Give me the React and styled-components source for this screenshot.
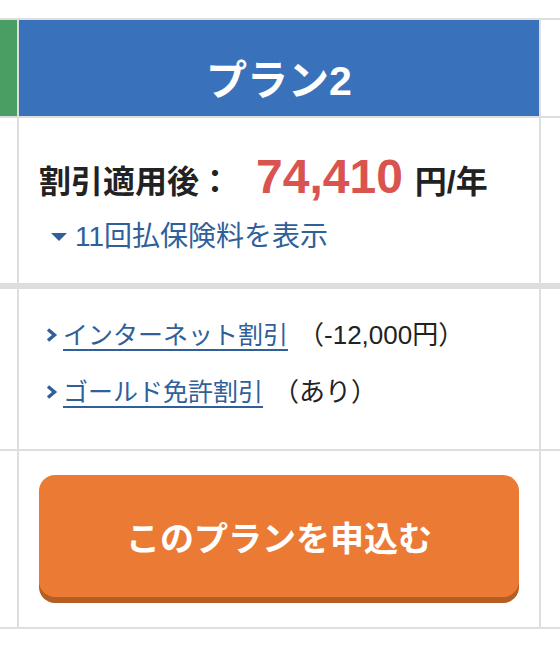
import React from "react";
import styled, { createGlobalStyle } from "styled-components";

const GlobalStyle = createGlobalStyle`
  html, body {
    margin: 0;
    padding: 0;
    background: #fff;
  }
  body {
    font-family: "Liberation Sans", "Noto Sans CJK JP", sans-serif;
    color: #222;
  }
`;

const Page = styled.div`
  padding-top: 18px;
`;

/* one table row: the grey background shows through the gaps as the rules */
const Row = styled.div`
  display: grid;
  grid-template-columns: 17px 520px 1fr;
  column-gap: 2px;
  background: #dedede;
  padding-top: ${(p) => (p.$first ? 2 : 0)}px;
  padding-bottom: ${(p) => p.$rule}px;
`;

const Cell = styled.div`
  background: ${(p) => p.$bg || "#fff"};
`;

const PlanHead = styled.div`
  height: 96px;
  box-sizing: border-box;
  padding-top: 17px;
  background: #3a71bb;
  color: #fff;
  display: flex;
  align-items: center;
  justify-content: center;
  font-size: 41px;
  font-weight: 700;
`;

const PriceCell = styled.div`
  background: #fff;
  padding: 35px 20px 26px;
`;

const PriceLine = styled.div`
  display: flex;
  align-items: baseline;
  line-height: 1;
`;

const PriceLabel = styled.span`
  font-size: 32px;
  font-weight: 700;
  color: #222;
`;

const Amount = styled.span`
  margin-left: 25px;
  font-size: 48px;
  font-weight: 700;
  color: #d9534f;
`;

const Unit = styled.span`
  margin-left: 12px;
  font-size: 32px;
  font-weight: 700;
  color: #222;
`;

const Toggle = styled.a`
  display: flex;
  align-items: center;
  gap: 8px;
  margin: 16px 0 0 12px;
  font-size: 28px;
  line-height: 40px;
  color: #30609a;
  text-decoration: none;
  cursor: pointer;
`;

const Caret = styled.span`
  width: 0;
  height: 0;
  border-left: 8px solid transparent;
  border-right: 8px solid transparent;
  border-top: 8px solid #30609a;
`;

const DiscountCell = styled.div`
  background: #fff;
  padding: 26px 20px 37px 26px;
`;

const DiscountList = styled.ul`
  list-style: none;
  margin: 0;
  padding: 0;
  display: flex;
  flex-direction: column;
  gap: 17px;
`;

const DiscountItem = styled.li`
  display: flex;
  align-items: center;
  font-size: 25px;
  line-height: 40px;
`;

const Chevron = styled.svg`
  width: 13px;
  height: 16px;
  margin-right: 5px;
  flex: none;
`;

const DiscountLink = styled.a`
  color: #30609a;
  text-decoration: underline;
  text-decoration-thickness: 2px;
  text-underline-offset: 5px;
  cursor: pointer;
`;

const Note = styled.span`
  margin-left: 10px;
  font-size: 26px;
  color: #222;
`;

const ApplyCell = styled.div`
  background: #fff;
  padding: 24px 20px;
`;

const ApplyButton = styled.button`
  display: flex;
  align-items: center;
  justify-content: center;
  width: 100%;
  height: 122px;
  margin-bottom: 6px;
  border: none;
  border-radius: 16px;
  background: #eb7b34;
  box-shadow: 0 6px 0 #b45e23;
  color: #fff;
  font-family: inherit;
  font-size: 34px;
  font-weight: 700;
  cursor: pointer;
`;

const ChevronIcon = () => (
  <Chevron viewBox="0 0 13 16" aria-hidden="true">
    <polyline
      points="3,2.5 9.5,8 3,13.5"
      fill="none"
      stroke="#30609a"
      strokeWidth="3.4"
      strokeLinecap="butt"
    />
  </Chevron>
);

const discounts = [
  { name: "インターネット割引", note: "（-12,000円）" },
  { name: "ゴールド免許割引", note: "（あり）" },
];

export default function App() {
  return (
    <Page>
      <GlobalStyle />
      <Row $first $rule={2}>
        <Cell $bg="#4a9e63" />
        <PlanHead>プラン2</PlanHead>
        <Cell />
      </Row>
      <Row $rule={6}>
        <Cell />
        <PriceCell>
          <PriceLine>
            <PriceLabel>割引適用後：</PriceLabel>
            <Amount>74,410</Amount>
            <Unit>円/年</Unit>
          </PriceLine>
          <Toggle>
            <Caret />
            11回払保険料を表示
          </Toggle>
        </PriceCell>
        <Cell />
      </Row>
      <Row $rule={2}>
        <Cell />
        <DiscountCell>
          <DiscountList>
            {discounts.map((d) => (
              <DiscountItem key={d.name}>
                <ChevronIcon />
                <DiscountLink>{d.name}</DiscountLink>
                <Note>{d.note}</Note>
              </DiscountItem>
            ))}
          </DiscountList>
        </DiscountCell>
        <Cell />
      </Row>
      <Row $rule={2}>
        <Cell />
        <ApplyCell>
          <ApplyButton>このプランを申込む</ApplyButton>
        </ApplyCell>
        <Cell />
      </Row>
    </Page>
  );
}
